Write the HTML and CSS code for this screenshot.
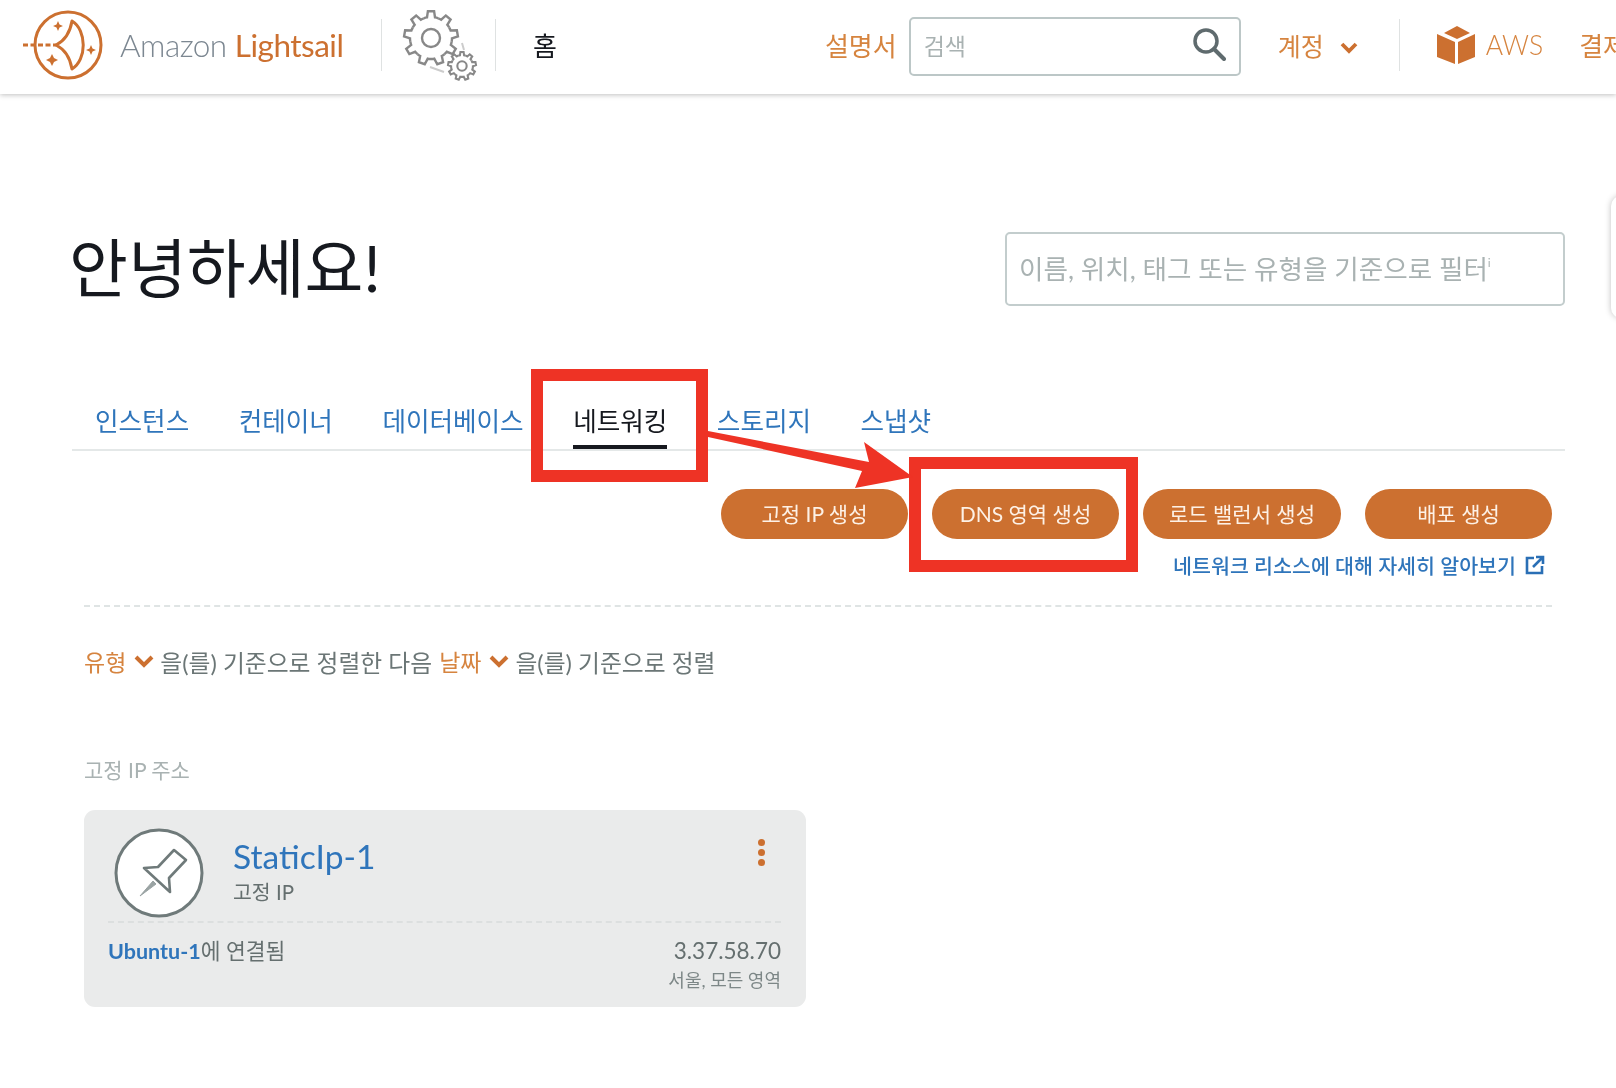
FILE: index.html
```html
<!DOCTYPE html>
<html lang="ko">
<head>
    <meta charset="UTF-8">
    <meta name="viewport" content="width=device-width, initial-scale=1.0">
    <title>Amazon Lightsail</title>
    <link rel="stylesheet" href="styles.css">
</head>
<body>
    <header class="topbar">
        <a class="brand" href="#">
            <svg class="brand-logo" viewBox="0 0 84 70" width="84" height="70">
                <circle cx="46" cy="35" r="33" fill="none" stroke="#cc7030" stroke-width="3"/>
                <path d="M1 35H34" fill="none" stroke="#cc7030" stroke-width="3" stroke-dasharray="5 2.5"/>
                <path d="M50 11C65 20 65 50 50 59C48 47 42 39 34 35C42 31 48 23 50 11Z" fill="none" stroke="#cc7030" stroke-width="3" stroke-linejoin="round"/>
                <path d="M36 11L37.500 14.500L41 16L37.500 17.500L36 21L34.500 17.500L31 16L34.500 14.500Z" fill="#cc7030"/>
                <path d="M30 44L32 48L36 50L32 52L30 56L28 52L24 50L28 48Z" fill="#cc7030"/>
                <path d="M69 35L70.500 38.500L74 40L70.500 41.500L69 45L67.500 41.500L64 40L67.500 38.500Z" fill="#cc7030"/>
            </svg>
            <span class="brand-name">Amazon <strong>Lightsail</strong></span>
        </a>
        <span class="divider"></span>
        <svg class="gears" viewBox="0 0 80 84" width="80" height="84">
            <defs>
                <path id="tooth" d="M-7.2 -19.7Q-5.5 -20.4 -4 -20.6L-3.1 -26.8L3.1 -26.8L4 -20.6Q5.5 -20.4 7.2 -19.7"/>
                <g id="gear">
                    <use href="#tooth"/>
                    <use href="#tooth" transform="rotate(40)"/>
                    <use href="#tooth" transform="rotate(80)"/>
                    <use href="#tooth" transform="rotate(120)"/>
                    <use href="#tooth" transform="rotate(160)"/>
                    <use href="#tooth" transform="rotate(200)"/>
                    <use href="#tooth" transform="rotate(240)"/>
                    <use href="#tooth" transform="rotate(280)"/>
                    <use href="#tooth" transform="rotate(320)"/>
                    <circle r="9"/>
                </g>
            </defs>
            <g fill="none" stroke="#888">
                <use href="#gear" transform="translate(29 35)" stroke-width="2.4"/>
                <use href="#gear" transform="translate(60 63) scale(.52)" stroke-width="4"/>
                <path d="M28 64L42 69M60 40L62 47" stroke="#ccc" stroke-width="2"/>
            </g>
        </svg>
        <span class="divider"></span>
        <a class="home-link" href="#">홈</a>

        <a class="docs-link" href="#">설명서</a>
        <div class="search-box">
            <span class="search-hint">검색</span>
            <svg class="search-icon" viewBox="0 0 34 34" width="34" height="34">
                <circle cx="14" cy="14" r="11" fill="none" stroke="#5f6b6e" stroke-width="3.5"/>
                <path d="M22 22L32 32" stroke="#5f6b6e" stroke-width="4" stroke-linecap="round"/>
            </svg>
        </div>
        <a class="account-link" href="#">계정
            <svg viewBox="0 0 18 13" width="18" height="13"><path d="M2 3L9 10L16 3" fill="none" stroke="#cc7030" stroke-width="3.8"/></svg>
        </a>
        <span class="divider divider-account"></span>
        <svg class="cube" viewBox="0 0 38 38" width="38" height="38">
            <path d="M20 0L33 7L20 13L7 7Z M0 8L18 16V38L0 31Z M21 16L38 8V31L21 38Z" fill="#cc7030"/>
        </svg>
        <a class="aws-link" href="#">AWS</a>
        <a class="billing-link" href="#">결제</a>
    </header>

    <main class="content">
        <section class="hero">
            <h1>안녕하세요!</h1>
            <div class="filter-box">이름, 위치, 태그 또는 유형을 기준으로 필터<sup>i</sup></div>
        </section>

        <nav class="tabs">
            <a href="#">인스턴스</a>
            <a href="#">컨테이너</a>
            <a href="#">데이터베이스</a>
            <a href="#" class="active">네트워킹</a>
            <a href="#">스토리지</a>
            <a href="#">스냅샷</a>
        </nav>

        <section class="panel">
            <div class="actions">
                <button>고정 IP 생성</button>
                <button>DNS 영역 생성</button>
                <button class="wide">로드 밸런서 생성</button>
                <button>배포 생성</button>
            </div>
            <a class="learn-more" href="#">네트워크 리소스에 대해 자세히 알아보기
                <svg viewBox="0 0 20 20" width="20" height="20">
                    <path d="M9 3H2V18H17V11" fill="none" stroke="#2a6fb5" stroke-width="2.6"/>
                    <path d="M8 12L17 3M11 2H18V9" fill="none" stroke="#2a6fb5" stroke-width="2.6"/>
                </svg>
            </a>

            <div class="sort-row">
                <a href="#">유형</a>
                <svg viewBox="0 0 20 14" width="20" height="14"><path d="M2 3L10 11L18 3" fill="none" stroke="#cc7030" stroke-width="4"/></svg>
                <span>을(를) 기준으로 정렬한 다음</span>
                <a href="#">날짜</a>
                <svg viewBox="0 0 20 14" width="20" height="14"><path d="M2 3L10 11L18 3" fill="none" stroke="#cc7030" stroke-width="4"/></svg>
                <span>을(를) 기준으로 정렬</span>
            </div>

            <h2 class="group-title">고정 IP 주소</h2>

            <article class="resource-card">
                <div class="card-top">
                    <svg class="pin-icon" viewBox="0 0 90 90" width="90" height="90">
                        <circle cx="45" cy="45" r="43" fill="#fff" stroke="#6f7a7a" stroke-width="3"/>
                        <path d="M60 22L72 32L55 50L56 64L30 40L44 39Z" fill="none" stroke="#6f7a7a" stroke-width="2.6" stroke-linejoin="round"/>
                        <path d="M39 53L42 56L26 68Z" fill="#9aa3a3" stroke="#9aa3a3" stroke-width="1" stroke-linejoin="round"/>
                    </svg>
                    <div class="card-title">
                        <a href="#">StaticIp-1</a>
                        <span>고정 IP</span>
                    </div>
                    <div class="kebab"><i></i><i></i><i></i></div>
                </div>
                <div class="card-bottom">
                    <div class="attached"><a href="#">Ubuntu-1</a>에 연결됨</div>
                    <div class="address">
                        <span class="ip">3.37.58.70</span>
                        <span class="zone">서울, 모든 영역</span>
                    </div>
                </div>
            </article>
        </section>
    </main>

    <div class="side-peek"></div>

    <!-- red annotations drawn on top of the screenshot -->
    <svg class="annotations" viewBox="0 0 1616 1088" width="1616" height="1088">
        <rect x="537" y="375" width="165" height="101" fill="none" stroke="#ee3325" stroke-width="12"/>
        <rect x="915" y="463" width="217" height="103" fill="none" stroke="#ee3325" stroke-width="12"/>
        <path d="M708 431L869 462L864 442L913 477L855 488L862 471L708 437Z" fill="#ee3325"/>
    </svg>
</body>
</html>
```

FILE: styles.css
```css
:root {
    --orange: #cc7030;
    --blue: #2f75bb;
    --line: #e4e8e8;
    --muted: #a9b2b2;
    --text: #16191f;
}

* {
    box-sizing: border-box;
}

html, body {
    margin: 0;
    height: 1088px;
    overflow: hidden;
}

body {
    position: relative;
    font-family: Lato, 'Noto Sans CJK KR', sans-serif;
    background: #fff;
    color: var(--text);
}

a {
    text-decoration: none;
}

/* the source screenshot is a soft upscale */
.topbar, .content {
    filter: blur(0.5px);
}

/* top bar */
.topbar {
    display: flex;
    align-items: center;
    height: 94px;
    padding: 0 0 5px 22px;
    white-space: nowrap;
    box-shadow: 0 1px 5px rgba(0, 0, 0, 0.25);
}

.topbar > * {
    flex: none;
}

.brand {
    display: flex;
    align-items: center;
    width: 359px;
}

.brand-name {
    margin-left: 14px;
    font-size: 31.500px;
    font-weight: 300;
    letter-spacing: -0.5px;
    color: #7c8791;
}

.brand-name strong {
    font-weight: 400;
    color: var(--orange);
}

.divider {
    width: 1px;
    height: 52px;
    background: #dfe2e2;
}

.gears {
    margin: 0 13px 0 20px;
}

.home-link {
    margin-left: 37px;
    font-size: 26px;
    color: var(--text);
}

.docs-link {
    margin-left: 268px;
    font-size: 26px;
    color: #d6843f;
}

.search-box {
    display: flex;
    align-items: center;
    justify-content: space-between;
    width: 332px;
    height: 59px;
    margin: 4px 0 0 12px;
    padding: 0 13px;
    border: 2px solid #bcc7c7;
    border-radius: 5px;
}

.search-hint {
    margin-top: -4px;
    font-size: 23px;
    color: var(--muted);
}

.search-icon {
    margin-top: -6px;
}

.account-link {
    display: flex;
    align-items: center;
    gap: 16px;
    margin-left: 37px;
    font-size: 25px;
    color: #d6843f;
}

.account-link svg {
    margin-top: 6px;
}

.divider-account {
    margin-left: 41px;
}

.cube {
    margin-left: 37px;
}

.aws-link {
    margin-left: 11px;
    font-size: 26.500px;
    font-weight: 300;
    color: #d6843f;
}

.billing-link {
    margin-left: 36px;
    font-size: 26px;
    color: #d6843f;
}

/* page body */
.content {
    padding: 0 51px 0 72px;
}

.hero {
    display: flex;
    align-items: center;
    justify-content: space-between;
    padding-top: 138px;
}

h1 {
    margin: -2px 0 0 -3px;
    font-size: 64px;
    line-height: 74px;
    font-weight: 400;
}

.filter-box {
    width: 560px;
    height: 74px;
    padding-left: 12px;
    border: 2px solid #c3cdcd;
    border-radius: 5px;
    font-size: 26.600px;
    line-height: 71px;
    color: var(--muted);
}

.filter-box sup {
    font-size: 12px;
    line-height: 0;
    vertical-align: 12px;
}

.tabs {
    display: flex;
    gap: 49.500px;
    height: 54px;
    margin-top: 91px;
    padding-left: 23px;
    border-bottom: 2px solid var(--line);
}

.tabs a {
    height: 52px;
    font-size: 25.600px;
    line-height: 48px;
    color: var(--blue);
}

.tabs a.active {
    color: var(--text);
    border-bottom: 4px solid var(--text);
}

.panel {
    padding: 0 13px 0 12px;
}

.actions {
    display: flex;
    justify-content: flex-end;
    gap: 24px;
    margin-top: 38px;
}

.actions button {
    width: 187px;
    height: 50px;
    padding: 0 0 3px;
    border: none;
    border-radius: 25px;
    background: var(--orange);
    color: #fdf1e6;
    font-family: inherit;
    font-size: 21px;
}

.actions button.wide {
    width: 198px;
}

.learn-more {
    display: flex;
    align-items: center;
    justify-content: flex-end;
    gap: 9px;
    height: 68px;
    padding: 0 7px 15px 0;
    border-bottom: 2px dashed #dfe4e4;
    font-size: 20.600px;
    font-weight: 500;
    color: var(--blue);
}

.sort-row {
    display: flex;
    align-items: center;
    height: 36px;
    margin-top: 36px;
    font-size: 23.800px;
    color: #6b7676;
}

.sort-row a {
    font-size: 23px;
    color: #d6843f;
}

.sort-row svg {
    margin: 0 6px 0 8px;
}

.sort-row span {
    margin-right: 7px;
}

.group-title {
    margin: 76px 0 25px;
    font-size: 21px;
    line-height: 30px;
    font-weight: 400;
    color: var(--muted);
}

.resource-card {
    width: 722px;
    height: 197px;
    padding: 18px 25px 0 24px;
    border-radius: 11px;
    background: #eaebeb;
}

.card-top {
    display: flex;
    height: 95px;
    border-bottom: 2px dashed #dcdfdf;
}

.pin-icon {
    margin-left: 6px;
}

.card-title {
    display: flex;
    flex-direction: column;
    margin-left: 29px;
}

.card-title a {
    margin-bottom: -4px;
    font-size: 33.600px;
    line-height: 56px;
    color: var(--blue);
}

.card-title span {
    font-size: 20.500px;
    line-height: 24px;
    color: #656f6f;
}

.kebab {
    display: flex;
    flex-direction: column;
    gap: 3px;
    margin: 11px 16px 0 auto;
}

.kebab i {
    width: 7px;
    height: 7px;
    border-radius: 50%;
    background: var(--orange);
}

.card-bottom {
    display: flex;
    justify-content: space-between;
    padding-top: 13px;
}

.attached {
    font-size: 21.500px;
    line-height: 30px;
    color: #656f6f;
}

.attached a {
    color: var(--blue);
    font-weight: 700;
}

.address {
    display: flex;
    flex-direction: column;
    align-items: flex-end;
}

.ip {
    font-size: 22.500px;
    line-height: 30px;
    color: #656f6f;
}

.zone {
    font-size: 18px;
    line-height: 28px;
    color: #7d8787;
}

/* the next card peeking in from the right edge */
.side-peek {
    position: absolute;
    top: 196px;
    left: 1611px;
    width: 60px;
    height: 122px;
    border-radius: 10px;
    background: #fff;
    box-shadow: 0 0 6px rgba(0, 0, 0, 0.25);
}

.annotations {
    position: absolute;
    top: 0;
    left: 0;
    pointer-events: none;
}
```
